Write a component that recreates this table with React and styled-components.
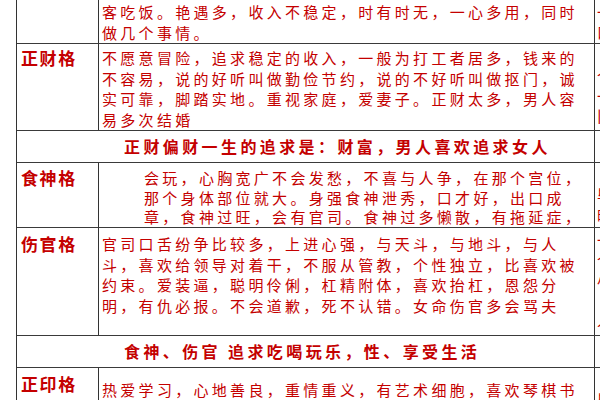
import React from "react";
import styled, { createGlobalStyle } from "styled-components";

const GlobalStyle = createGlobalStyle`
  *, *::before, *::after {
    box-sizing: border-box;
  }
  html, body {
    margin: 0;
    padding: 0;
    background: #ffffff;
    overflow: hidden;
  }
`;

const Page = styled.div`
  width: 760px;
  height: 400px;
  padding-left: 16px;
  overflow: hidden;
  font-family: "Noto Sans CJK SC", "Noto Sans", sans-serif;
  color: #c40000;
`;

const Table = styled.div`
  border-left: 1px solid #333;
  width: 740px;
`;

const Row = styled.div`
  display: grid;
  grid-template-columns: 82px 496px 1fr;
  height: ${({ h }) => h}px;
  border-bottom: 1px solid #3a3a3a;
  overflow: hidden;
`;

const LabelCell = styled.div`
  border-right: 1px solid #333;
  padding: ${({ top }) => top}px 0 0 4px;
  font-size: 17px;
  font-weight: 700;
  letter-spacing: 1.6px;
  line-height: 20px;
  white-space: nowrap;
`;

const TextCell = styled.div`
  border-right: 1px solid #333;
  padding: ${({ top }) => top}px 0 0 ${({ indent }) => indent}px;
  font-size: 15px;
  letter-spacing: 3.3px;
  line-height: ${({ lh }) => lh}px;
`;

const Line = styled.div`
  white-space: nowrap;
`;

const HeadingCell = styled.div`
  grid-column: span 2;
  border-right: 1px solid #333;
  display: flex;
  align-items: center;
  padding: 0 0 2px 107px;
  font-size: 16px;
  font-weight: 700;
  letter-spacing: 3.4px;
  white-space: nowrap;
`;

const SideCell = styled.div`
  padding: 2px 0 0 2px;
  font-size: 15px;
  line-height: 20px;
  letter-spacing: 3px;
  white-space: nowrap;
  overflow: hidden;
`;

const rows = [
  {
    kind: "text",
    h: 44,
    label: "",
    top: 2,
    lh: 20.5,
    indent: 3,
    lines: [
      "客吃饭。艳遇多，收入不稳定，时有时无，一心多用，同时",
      "做几个事情。",
    ],
    side: ["一", "口"],
  },
  {
    kind: "text",
    h: 87,
    label: "正财格",
    top: 4,
    lh: 20.5,
    indent: 3,
    lines: [
      "不愿意冒险，追求稳定的收入，一般为打工者居多，钱来的",
      "不容易，说的好听叫做勤俭节约，说的不好听叫做抠门，诚",
      "实可靠，脚踏实地。重视家庭，爱妻子。正财太多，男人容",
      "易多次结婚",
    ],
    side: ["", "个", "一", "旧"],
  },
  {
    kind: "heading",
    h: 32,
    text: "正财偏财一生的追求是：财富，男人喜欢追求女人",
    side: ["《"],
  },
  {
    kind: "text",
    h: 65,
    label: "食神格",
    top: 5,
    lh: 19.5,
    indent: 45,
    lines: [
      "会玩，心胸宽广不会发愁，不喜与人争，在那个宫位，",
      "那个身体部位就大。身强食神泄秀，口才好，出口成",
      "章，食神过旺，会有官司。食神过多懒散，有拖延症，",
    ],
    side: ["", "毕", "时"],
  },
  {
    kind: "text",
    h: 108,
    label: "伤官格",
    top: 6,
    lh: 20.7,
    indent: 3,
    lines: [
      "官司口舌纷争比较多，上进心强，与天斗，与地斗，与人",
      "斗，喜欢给领导对着干，不服从管教，个性独立，比喜欢被",
      "约束。爱装逼，聪明伶俐，杠精附体，喜欢抬杠，恩怨分",
      "明，有仇必报。不会道歉，死不认错。女命伤官多会骂夫",
    ],
    side: ["一", "个", "小", "《", "人"],
  },
  {
    kind: "heading",
    h: 32,
    text: "食神、伤官 追求吃喝玩乐，性、享受生活",
    side: [""],
  },
  {
    kind: "text",
    h: 60,
    label: "正印格",
    top: 6,
    lh: 20.5,
    indent: 3,
    lines: ["热爱学习，心地善良，重情重义，有艺术细胞，喜欢琴棋书"],
    side: ["", "毕"],
  },
];

const Side = ({ lines }) => (
  <SideCell>
    {lines.map((l, i) => (
      <Line key={i}>{l || "\u00a0"}</Line>
    ))}
  </SideCell>
);

export default function App() {
  return (
    <>
      <GlobalStyle />
      <Page>
        <Table>
          {rows.map((row, i) =>
            row.kind === "heading" ? (
              <Row key={i} h={row.h}>
                <HeadingCell>{row.text}</HeadingCell>
                <Side lines={row.side} />
              </Row>
            ) : (
              <Row key={i} h={row.h}>
                <LabelCell top={row.top}>{row.label}</LabelCell>
                <TextCell top={row.top + (row.label === "正印格" ? 6 : 0)} lh={row.lh} indent={row.indent}>
                  {row.lines.map((l, j) => (
                    <Line key={j}>{l}</Line>
                  ))}
                </TextCell>
                <Side lines={row.side} />
              </Row>
            )
          )}
        </Table>
      </Page>
    </>
  );
}
